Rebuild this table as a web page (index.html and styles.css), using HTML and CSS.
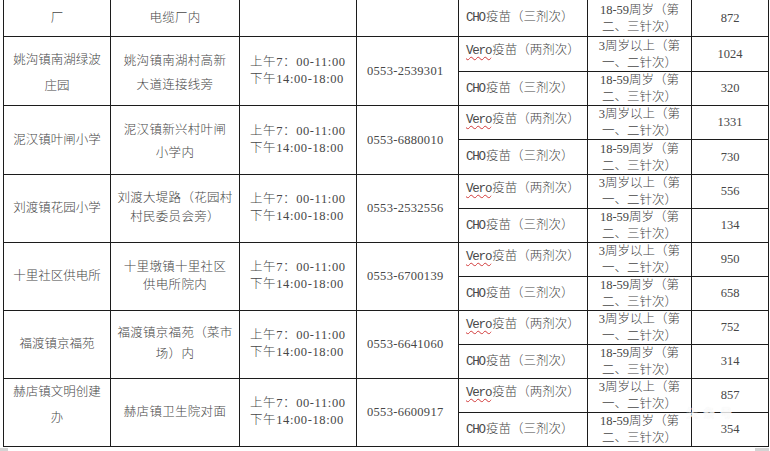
FILE: index.html
```html
<!DOCTYPE html>
<html lang="zh-CN">
<head>
<meta charset="utf-8">
<title>疫苗接种点</title>
<link rel="stylesheet" href="styles.css">
</head>
<body>
<div class="page">
<table class="sheet">
  <colgroup>
    <col class="c1"><col class="c2"><col class="c3"><col class="c4"><col class="c5"><col class="c6"><col class="c7">
  </colgroup>
  <tbody>
    <tr class="r0">
      <td class="loc">厂</td>
      <td class="addr">电缆厂内</td>
      <td class="time"></td>
      <td class="phone"></td>
      <td class="vac"><span class="lat">CHO</span>疫苗（三剂次）</td>
      <td class="age"><div class="age-in">18-59周岁（第<br>二、三针次）</div></td>
      <td class="num">872</td>
    </tr>

    <tr class="ra">
      <td class="loc pt5" rowspan="2">姚沟镇南湖绿波<br>庄园</td>
      <td class="addr lh24 pt5" rowspan="2">姚沟镇南湖村高新<br>大道连接线旁</td>
      <td class="time" rowspan="2">上午7：00-11:00<br>下午14:00-18:00</td>
      <td class="phone" rowspan="2">0553-2539301</td>
      <td class="vac vero"><span class="lat wavy">Vero</span>疫苗（两剂次）</td>
      <td class="age"><div class="age-in">3周岁以上（第<br>一、二针次）</div></td>
      <td class="num">1024</td>
    </tr>
    <tr class="rb">
      <td class="vac"><span class="lat">CHO</span>疫苗（三剂次）</td>
      <td class="age"><div class="age-in">18-59周岁（第<br>二、三针次）</div></td>
      <td class="num">320</td>
    </tr>

    <tr class="rb">
      <td class="loc" rowspan="2">泥汉镇叶闸小学</td>
      <td class="addr lh23 pt4" rowspan="2">泥汉镇新兴村叶闸<br>小学内</td>
      <td class="time" rowspan="2">上午7：00-11:00<br>下午14:00-18:00</td>
      <td class="phone" rowspan="2">0553-6880010</td>
      <td class="vac vero"><span class="lat wavy">Vero</span>疫苗（两剂次）</td>
      <td class="age"><div class="age-in">3周岁以上（第<br>一、二针次）</div></td>
      <td class="num">1331</td>
    </tr>
    <tr class="ra">
      <td class="vac"><span class="lat">CHO</span>疫苗（三剂次）</td>
      <td class="age"><div class="age-in">18-59周岁（第<br>二、三针次）</div></td>
      <td class="num">730</td>
    </tr>

    <tr class="rb">
      <td class="loc" rowspan="2">刘渡镇花园小学</td>
      <td class="addr lh19" rowspan="2">刘渡大堤路（花园村<br>村民委员会旁）</td>
      <td class="time" rowspan="2">上午7：00-11:00<br>下午14:00-18:00</td>
      <td class="phone" rowspan="2">0553-2532556</td>
      <td class="vac vero"><span class="lat wavy">Vero</span>疫苗（两剂次）</td>
      <td class="age"><div class="age-in">3周岁以上（第<br>一、二针次）</div></td>
      <td class="num">556</td>
    </tr>
    <tr class="rb">
      <td class="vac"><span class="lat">CHO</span>疫苗（三剂次）</td>
      <td class="age"><div class="age-in">18-59周岁（第<br>二、三针次）</div></td>
      <td class="num">134</td>
    </tr>

    <tr class="rb">
      <td class="loc" rowspan="2">十里社区供电所</td>
      <td class="addr lh18" rowspan="2">十里墩镇十里社区<br>供电所院内</td>
      <td class="time" rowspan="2">上午7：00-11:00<br>下午14:00-18:00</td>
      <td class="phone" rowspan="2">0553-6700139</td>
      <td class="vac vero"><span class="lat wavy">Vero</span>疫苗（两剂次）</td>
      <td class="age"><div class="age-in">3周岁以上（第<br>一、二针次）</div></td>
      <td class="num">950</td>
    </tr>
    <tr class="rb">
      <td class="vac"><span class="lat">CHO</span>疫苗（三剂次）</td>
      <td class="age"><div class="age-in">18-59周岁（第<br>二、三针次）</div></td>
      <td class="num">658</td>
    </tr>

    <tr class="rb">
      <td class="loc" rowspan="2">福渡镇京福苑</td>
      <td class="addr lh21" rowspan="2">福渡镇京福苑（菜市<br>场）内</td>
      <td class="time" rowspan="2">上午7：00-11:00<br>下午14:00-18:00</td>
      <td class="phone" rowspan="2">0553-6641060</td>
      <td class="vac vero"><span class="lat wavy">Vero</span>疫苗（两剂次）</td>
      <td class="age"><div class="age-in">3周岁以上（第<br>一、二针次）</div></td>
      <td class="num">752</td>
    </tr>
    <tr class="rb">
      <td class="vac"><span class="lat">CHO</span>疫苗（三剂次）</td>
      <td class="age"><div class="age-in">18-59周岁（第<br>二、三针次）</div></td>
      <td class="num">314</td>
    </tr>

    <tr class="rb">
      <td class="loc pb14" rowspan="2">赫店镇文明创建<br>办</td>
      <td class="addr" rowspan="2">赫店镇卫生院对面</td>
      <td class="time" rowspan="2">上午7：00-11:00<br>下午14:00-18:00</td>
      <td class="phone" rowspan="2">0553-6600917</td>
      <td class="vac vero"><span class="lat wavy">Vero</span>疫苗（两剂次）</td>
      <td class="age"><div class="age-in">3周岁以上（第<br>一、二针次）</div></td>
      <td class="num">857</td>
    </tr>
    <tr class="rb">
      <td class="vac"><span class="lat">CHO</span>疫苗（三剂次）</td>
      <td class="age"><div class="age-in">18-59周岁（第<br>二、三针次）</div></td>
      <td class="num">354</td>
    </tr>
  </tbody>
</table>
<span class="watermark">头条号</span>
<span class="speck speck-left"></span>
<span class="speck speck-right"></span>
</div>
</body>
</html>
```

FILE: styles.css
```css
html, body {
  margin: 0;
  padding: 0;
  background: #ffffff;
}

.page {
  position: relative;
  width: 770px;
  height: 451px;
  overflow: hidden;
  padding-left: 3px;
  box-sizing: border-box;
  font-family: "Liberation Serif", "Noto Sans CJK SC", serif;
  font-size: 12.5px;
  font-weight: 300;
  color: #474747;
}

.sheet {
  border-collapse: collapse;
  table-layout: fixed;
  width: 766px;
}

.c1 { width: 107px; }
.c2 { width: 129px; }
.c3 { width: 117px; }
.c4 { width: 102px; }
.c5 { width: 129px; }
.c6 { width: 104px; }
.c7 { width: 77px; }

.sheet td {
  border: 1px solid #1c1c1c;
  padding: 0;
  vertical-align: middle;
  white-space: nowrap;
  overflow: visible;
  line-height: 16px;
}

.sheet .r0 td {
  border-top: none;
}

.r0 { height: 36px; }
.ra { height: 35px; }
.rb { height: 34px; }

.sheet .loc {
  text-align: center;
  line-height: 26px;
}

.sheet .addr {
  text-align: center;
  line-height: 20px;
  letter-spacing: 0.3px;
}

.sheet .lh24 { line-height: 24px; }
.sheet .lh23 { line-height: 23px; }
.sheet .lh21 { line-height: 21px; }
.sheet .lh19 { line-height: 19px; }
.sheet .lh18 { line-height: 18px; }

.sheet .pt4 { padding-top: 4px; }
.sheet .pt5 { padding-top: 5px; }
.sheet .pb14 { padding-bottom: 14px; }

.sheet .time {
  text-align: left;
  padding-left: 10px;
  line-height: 17px;
  letter-spacing: 0.6px;
}

.sheet .phone {
  text-align: left;
  padding-left: 10px;
  letter-spacing: 0.3px;
}

.sheet .vac {
  text-align: left;
  padding-left: 7px;
}

.sheet .vero {
  padding-bottom: 6px;
}

.lat {
  font-family: "Liberation Mono", monospace;
  font-size: 12.5px;
  font-weight: 400;
  letter-spacing: -1.2px;
  margin-right: 1px;
}

.wavy {
  text-decoration: underline wavy #d23a3a;
  text-decoration-thickness: 1px;
  text-underline-offset: 2px;
}

.sheet .age {
  text-align: center;
}

.age-in {
  height: 30px;
  line-height: 17px;
  margin-top: -2px;
}

.sheet .num {
  text-align: center;
}

.watermark {
  position: absolute;
  left: 686px;
  top: 405px;
  font-family: "Noto Sans CJK SC", sans-serif;
  font-size: 12px;
  line-height: 16px;
  font-weight: 700;
  letter-spacing: 5px;
  color: rgba(255, 255, 255, 0.8);
  text-shadow: 0 0 1px rgba(150, 150, 150, 0.15);
}

.speck {
  position: absolute;
  background: #d4d4d4;
  height: 3px;
}

.speck-left {
  left: 0;
  top: 448px;
  width: 8px;
}

.speck-right {
  left: 755px;
  top: 448px;
  width: 14px;
}
```
